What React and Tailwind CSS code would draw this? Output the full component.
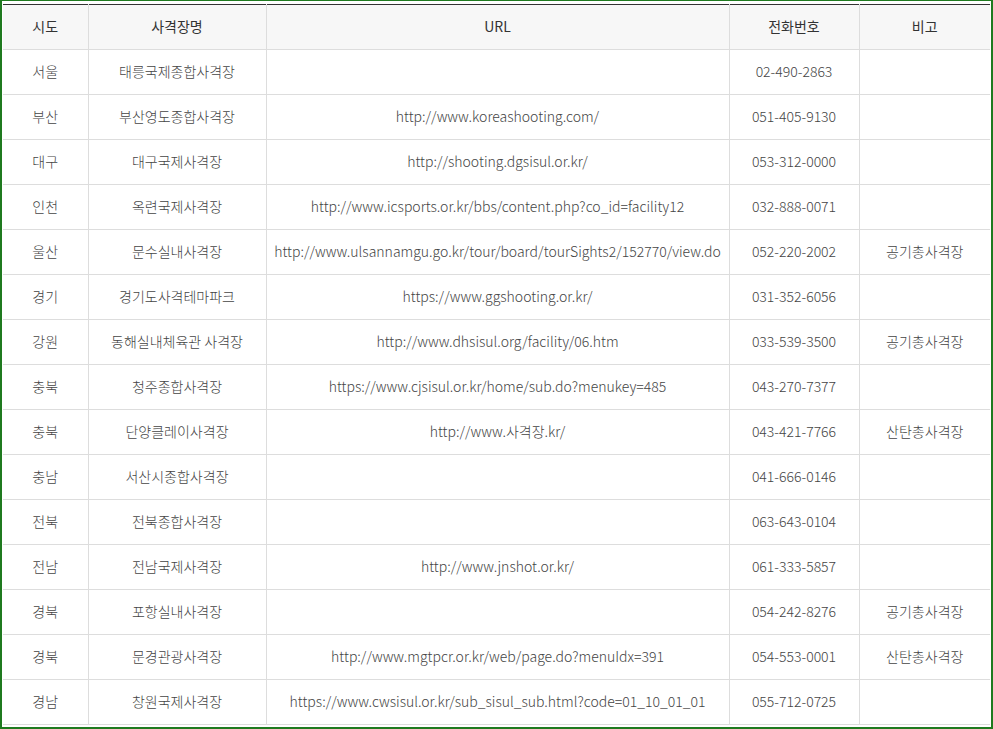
import React from "react";

const rows = [
  ["서울", "태릉국제종합사격장", "", "02-490-2863", ""],
  ["부산", "부산영도종합사격장", "http://www.koreashooting.com/", "051-405-9130", ""],
  ["대구", "대구국제사격장", "http://shooting.dgsisul.or.kr/", "053-312-0000", ""],
  ["인천", "옥련국제사격장", "http://www.icsports.or.kr/bbs/content.php?co_id=facility12", "032-888-0071", ""],
  ["울산", "문수실내사격장", "http://www.ulsannamgu.go.kr/tour/board/tourSights2/152770/view.do", "052-220-2002", "공기총사격장"],
  ["경기", "경기도사격테마파크", "https://www.ggshooting.or.kr/", "031-352-6056", ""],
  ["강원", "동해실내체육관 사격장", "http://www.dhsisul.org/facility/06.htm", "033-539-3500", "공기총사격장"],
  ["충북", "청주종합사격장", "https://www.cjsisul.or.kr/home/sub.do?menukey=485", "043-270-7377", ""],
  ["충북", "단양클레이사격장", "http://www.사격장.kr/", "043-421-7766", "산탄총사격장"],
  ["충남", "서산시종합사격장", "", "041-666-0146", ""],
  ["전북", "전북종합사격장", "", "063-643-0104", ""],
  ["전남", "전남국제사격장", "http://www.jnshot.or.kr/", "061-333-5857", ""],
  ["경북", "포항실내사격장", "", "054-242-8276", "공기총사격장"],
  ["경북", "문경관광사격장", "http://www.mgtpcr.or.kr/web/page.do?menuIdx=391", "054-553-0001", "산탄총사격장"],
  ["경남", "창원국제사격장", "https://www.cwsisul.or.kr/sub_sisul_sub.html?code=01_10_01_01", "055-712-0725", ""],
];

const headers = ["시도", "사격장명", "URL", "전화번호", "비고"];

export default function App() {
  return (
    <div
      className="w-[993px] h-[729px] bg-white border-[#1f7a1f] border-t border-l-2 border-r-2 border-b-2 pt-[3px] pl-px pr-px overflow-hidden"
      style={{ fontFamily: '"Noto Sans CJK KR", "Noto Sans", sans-serif' }}
    >
      <table className="w-[987px] border-collapse table-fixed text-[14px] text-[#444] font-light">
        <colgroup>
          <col className="w-[85px]" />
          <col className="w-[178px]" />
          <col className="w-[463px]" />
          <col className="w-[130px]" />
          <col className="w-[131px]" />
        </colgroup>
        <thead>
          <tr className="h-[45px] bg-[#f7f7f7] border-t border-t-[#333]">
            {headers.map((h, i) => (
              <th
                key={i}
                className={`font-normal text-[#333] text-center pb-[2px] border-b border-[#ddd] ${i < 4 ? "border-r" : ""}`}
              >
                {h}
              </th>
            ))}
          </tr>
        </thead>
        <tbody>
          {rows.map((r, ri) => (
            <tr key={ri} className="h-[45px]">
              {r.map((c, ci) => (
                <td
                  key={ci}
                  className={`text-center whitespace-nowrap pb-[1px] border-b border-[#ddd] ${ci < 4 ? "border-r" : ""}`}
                >
                  {c}
                </td>
              ))}
            </tr>
          ))}
        </tbody>
      </table>
    </div>
  );
}
